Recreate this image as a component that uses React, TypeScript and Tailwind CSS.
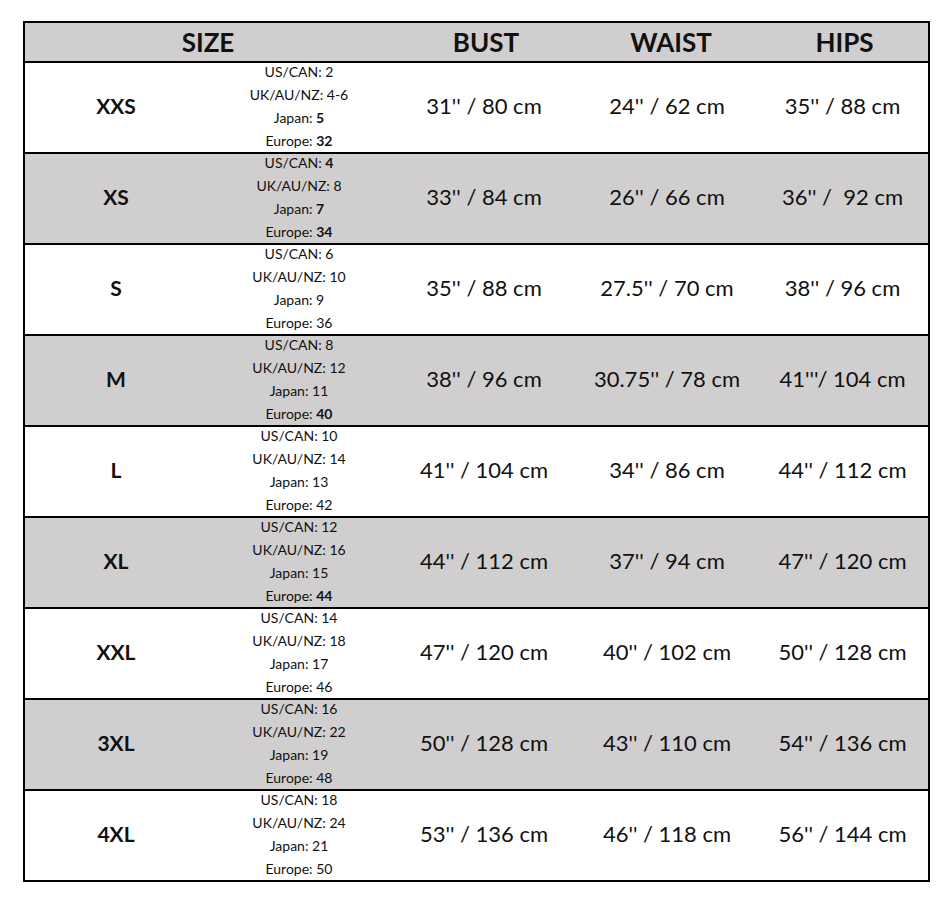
const rows = [
  { size: 'XXS', us: '2', uk: '4-6', jp: '5', eu: '32', bold: ['jp', 'eu'], bust: "31'' / 80 cm", waist: "24'' / 62 cm", hips: "35'' / 88 cm" },
  { size: 'XS', us: '4', uk: '8', jp: '7', eu: '34', bold: ['us', 'jp', 'eu'], bust: "33'' / 84 cm", waist: "26'' / 66 cm", hips: "36'' /  92 cm" },
  { size: 'S', us: '6', uk: '10', jp: '9', eu: '36', bold: [], bust: "35'' / 88 cm", waist: "27.5'' / 70 cm", hips: "38'' / 96 cm" },
  { size: 'M', us: '8', uk: '12', jp: '11', eu: '40', bold: ['eu'], bust: "38'' / 96 cm", waist: "30.75'' / 78 cm", hips: "41'''/ 104 cm" },
  { size: 'L', us: '10', uk: '14', jp: '13', eu: '42', bold: [], bust: "41'' / 104 cm", waist: "34'' / 86 cm", hips: "44'' / 112 cm" },
  { size: 'XL', us: '12', uk: '16', jp: '15', eu: '44', bold: ['eu'], bust: "44'' / 112 cm", waist: "37'' / 94 cm", hips: "47'' / 120 cm" },
  { size: 'XXL', us: '14', uk: '18', jp: '17', eu: '46', bold: [], bust: "47'' / 120 cm", waist: "40'' / 102 cm", hips: "50'' / 128 cm" },
  { size: '3XL', us: '16', uk: '22', jp: '19', eu: '48', bold: [], bust: "50'' / 128 cm", waist: "43'' / 110 cm", hips: "54'' / 136 cm" },
  { size: '4XL', us: '18', uk: '24', jp: '21', eu: '50', bold: [], bust: "53'' / 136 cm", waist: "46'' / 118 cm", hips: "56'' / 144 cm" },
]

const cols = 'grid grid-cols-[182px_184px_186px_180px_171px]'

const Line = ({ label, value, bold }: { label: string; value: string; bold: boolean }) => (
  <div className="h-[23px] leading-[23px]">
    {label}: <span className={bold ? 'font-bold' : ''}>{value}</span>
  </div>
)

const App = () => {
  return (
    <div className="min-h-[903px] bg-white pt-[21px] pl-[23px] text-[#111] font-['Lato',sans-serif]">
      <div className="w-[907px] border-2 border-black">
        {/* header */}
        <div className={`${cols} h-[40px] items-center border-b-2 border-black bg-[#d0cece] text-[26px] font-bold`}>
          <div className="col-span-2 text-center">SIZE</div>
          <div className="text-center pl-[4px]">BUST</div>
          <div className="text-center pl-[8px]">WAIST</div>
          <div className="text-center pl-[4px]">HIPS</div>
        </div>

        {rows.map((r, i) => (
          <div
            key={r.size}
            className={`${cols} items-center ${i % 2 === 1 ? 'bg-[#d0cece]' : 'bg-white'} ${
              i === rows.length - 1 ? 'h-[89px]' : 'h-[91px] border-b-2 border-black'
            }`}
          >
            <div className="text-center text-[21px] font-bold pb-[4px]">{r.size}</div>
            <div className="flex flex-col items-center text-[14px] -mt-[3px]">
              <Line label="US/CAN" value={r.us} bold={r.bold.includes('us')} />
              <Line label="UK/AU/NZ" value={r.uk} bold={r.bold.includes('uk')} />
              <Line label="Japan" value={r.jp} bold={r.bold.includes('jp')} />
              <Line label="Europe" value={r.eu} bold={r.bold.includes('eu')} />
            </div>
            <div className="text-center text-[22px] whitespace-pre pb-[4px]">{r.bust}</div>
            <div className="text-center text-[22px] whitespace-pre pb-[4px]">{r.waist}</div>
            <div className="text-center text-[22px] whitespace-pre pb-[4px]">{r.hips}</div>
          </div>
        ))}
      </div>
    </div>
  )
}

export default App
